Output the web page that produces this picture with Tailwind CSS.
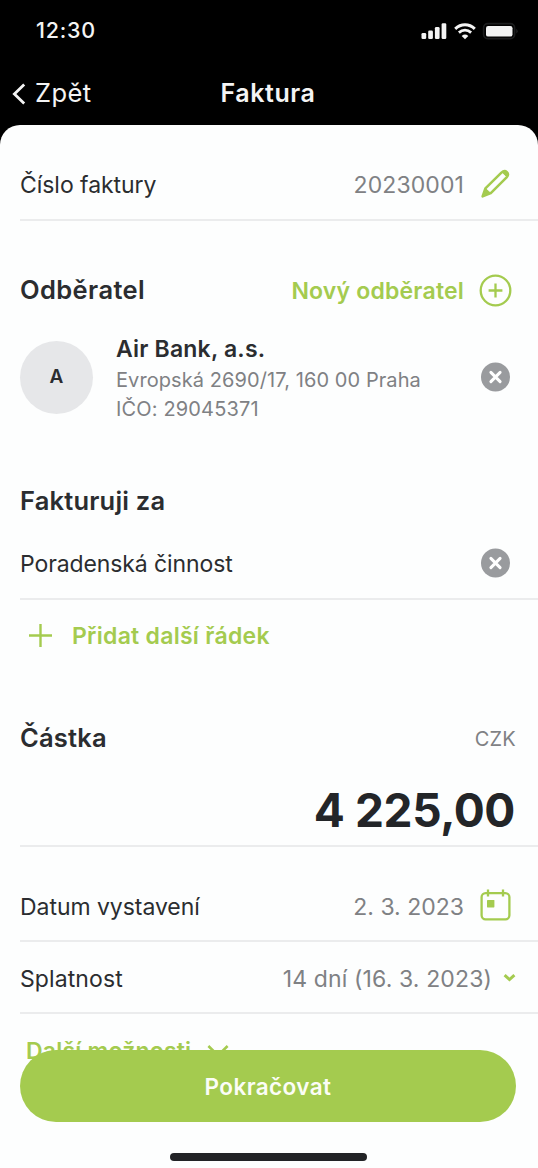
<!DOCTYPE html>
<html lang="cs">
<head>
<meta charset="utf-8">
<title>Faktura</title>
<script src="https://cdn.jsdelivr.net/npm/@tailwindcss/browser@4"></script>
</head>
<body class="bg-black">
<div class="relative flex h-[1168px] w-[538px] flex-col overflow-hidden bg-black font-['Inter','Liberation_Sans',sans-serif] text-[#2b2d30] whitespace-nowrap">
  <header class="h-[125px] shrink-0 text-[#f4f4f4]">
    <div class="flex h-[60px] items-center justify-between pl-9 pr-[18px]">
      <span class="text-[21.5px] font-medium tracking-[0.8px]">12:30</span>
      <div class="flex items-center">
        <svg class="mt-[2px]" width="26" height="18" viewBox="0 0 26 18" fill="#f4f4f4"><rect x="0.5" y="11" width="4.7" height="6" rx="1.3"/><rect x="7.2" y="8.5" width="4.7" height="8.5" rx="1.3"/><rect x="13.9" y="5" width="4.7" height="12" rx="1.3"/><rect x="20.6" y="1.2" width="4.7" height="15.8" rx="1.3"/></svg>
        <svg class="ml-[6px] mt-[1px]" width="24" height="18" viewBox="0 0 24 18" fill="none" stroke="#f4f4f4"><path d="M2.2 6.8C8 1.4 16 1.4 21.8 6.8" stroke-width="3"/><path d="M5.9 10.6C9.5 7.4 14.5 7.4 18.1 10.6" stroke-width="2.8"/><path d="M12 17.2 8.7 13.9Q12 11.2 15.3 13.9Z" fill="#f4f4f4" stroke="none"/></svg>
        <svg class="ml-[5px] mr-[1px] mt-[2px]" width="37" height="18" viewBox="0 0 37 18"><rect x="1.6" y="1.6" width="31" height="15" rx="4.2" fill="none" stroke="#1c1d1e" stroke-width="1.6"/><rect x="4" y="4" width="26.5" height="10.6" rx="2.2" fill="#f4f4f4"/><path d="M34.2 6.8q3.2 2.4 0 4.8Z" fill="#1c1d1e"/></svg>
      </div>
    </div>
    <div class="grid h-[65px] grid-cols-3 items-center pl-[12px] pr-[14px] pt-[2px]">
      <div class="flex items-center gap-[8px]">
        <svg width="15" height="22" viewBox="0 0 15 22" fill="none" stroke="#f4f4f4" stroke-width="2.8"><path d="M12.2 1.6 2.4 11l9.8 9.4"/></svg>
        <span class="text-[25.5px] tracking-[0.4px]">Zpět</span>
      </div>
      <h1 class="text-center text-[25px] font-semibold tracking-[0.55px]">Faktura</h1>
    </div>
  </header>

  <main class="flex-1 rounded-t-[20px] bg-[#fdfefe] pl-5">
    <div class="flex h-[96px] items-center justify-between border-b-2 border-[#ebeced] pr-[28px] pt-[26px]">
      <span class="text-[23px] tracking-[-0.05px]">Číslo faktury</span>
      <div class="flex items-center gap-[16px]">
        <span class="text-[23px] tracking-[0.1px] text-[#7f8184]">20230001</span>
        <svg class="-mt-[2px]" width="30" height="30" viewBox="0 0 30 30" fill="none" stroke="#a4cb4f" stroke-linejoin="round"><path d="M2.6 27.4 5.4 19.4 21.4 3.6Q24.4 1 26.9 3.1 29.2 5.4 26.6 8.4L10.8 24.2Z" stroke-width="2.5"/><path d="M2.6 27.4 5.6 19.6 10.6 24.2Z" fill="#a4cb4f"/><path d="M22.4 3.6 26.6 7.6Q28.8 5 26.6 3.2 24.6 1.6 22.4 3.6Z" fill="#a4cb4f" stroke-width="1"/></svg>
      </div>
    </div>

    <section class="pt-[39px]">
      <div class="flex h-[60px] items-center justify-between pr-[26px]">
        <h2 class="text-[25.5px] font-semibold tracking-[0.4px]">Odběratel</h2>
        <div class="flex items-center gap-[15px] text-[#a4cb4f]">
          <span class="pt-[2px] text-[23px] font-semibold tracking-[0.2px]">Nový odběratel</span>
          <svg width="33" height="33" viewBox="0 0 33 33" fill="none" stroke="currentColor" stroke-width="2.3"><circle cx="16.5" cy="16.5" r="14.8"/><path d="M16.5 9.6v13.8M9.6 16.5h13.8"/></svg>
        </div>
      </div>
      <div class="flex h-[113px] items-center pr-[28px]">
        <div class="mt-px flex size-[73px] shrink-0 items-center justify-center rounded-full bg-[#e6e7e9] pt-px text-[19px] font-semibold">A</div>
        <div class="ml-[23px] flex-1 pt-[5px]">
          <div class="text-[23px] font-semibold leading-[31px] tracking-[0.2px]">Air Bank, a.s.</div>
          <div class="pt-px text-[20px] leading-[29px] tracking-[0.08px] text-[#7f8184]">Evropská 2690/17, 160 00 Praha</div>
          <div class="text-[20px] leading-[29px] tracking-[0.15px] text-[#7f8184]">IČO: 29045371</div>
        </div>
        <svg width="30" height="30" viewBox="0 0 30 30"><circle cx="15.5" cy="15" r="14.5" fill="#999b9e"/><path d="m10.9 10.4 9.2 9.2m0-9.2-9.2 9.2" stroke="#fff" stroke-width="3" stroke-linecap="round"/></svg>
      </div>
    </section>

    <section class="pt-[38px]">
      <h2 class="flex h-[60px] items-center pt-px text-[25.5px] font-semibold tracking-[0.2px]">Fakturuji za</h2>
      <div class="flex h-[69px] items-center justify-between border-b-2 border-[#ebeced] pr-[28px]">
        <span class="text-[23px] tracking-[-0.1px]">Poradenská činnost</span>
        <svg class="-mt-[3px]" width="30" height="30" viewBox="0 0 30 30"><circle cx="15.5" cy="15" r="14.5" fill="#999b9e"/><path d="m10.9 10.4 9.2 9.2m0-9.2-9.2 9.2" stroke="#fff" stroke-width="3" stroke-linecap="round"/></svg>
      </div>
      <div class="flex h-[72px] items-center pl-[8px] text-[#a4cb4f]">
        <svg class="-mt-px" width="25" height="25" viewBox="0 0 25 25" stroke="currentColor" stroke-width="2.4"><path d="M12.5 1v23M1 12.5h23"/></svg>
        <span class="ml-[19px] text-[23px] font-semibold tracking-[0.27px]">Přidat další řádek</span>
      </div>
    </section>

    <section class="border-b-2 border-[#ebeced] pr-[22px] pt-[36px]">
      <div class="flex h-[60px] items-center justify-between pt-px">
        <h2 class="text-[25.5px] font-semibold tracking-[0.2px]">Částka</h2>
        <span class="text-[20px] tracking-[0.2px] text-[#7f8184]">CZK</span>
      </div>
      <div class="flex h-[77px] items-center justify-end pr-px pt-[8px] text-[46px] font-bold tracking-[-0.4px] text-[#232528]">4 225,00</div>
    </section>

    <div class="flex h-[95px] items-center justify-between border-b-2 border-[#ebeced] pr-[27px] pt-[28px]">
      <span class="text-[23px] tracking-[-0.05px]">Datum vystavení</span>
      <div class="flex items-center gap-[16px]">
        <span class="text-[23px] text-[#7f8184]">2. 3. 2023</span>
        <svg class="-mt-[5px]" width="31" height="32" viewBox="0 0 31 32" fill="none" stroke="#a4cb4f" stroke-width="2.3"><rect x="1.6" y="4.1" width="27.8" height="26.2" rx="4"/><path d="M8 .6v6.8M23 .6v6.8"/><rect x="7" y="11" width="7.4" height="7.4" rx=".6" fill="#a4cb4f" stroke="none"/></svg>
      </div>
    </div>
    <div class="flex h-[72px] items-center justify-between border-b-2 border-[#ebeced] pr-[22px] pt-[4px]">
      <span class="text-[23px] tracking-[0.1px]">Splatnost</span>
      <div class="flex items-center gap-[11px]">
        <span class="text-[23px] tracking-[0.13px] text-[#7f8184]">14 dní (16. 3. 2023)</span>
        <svg class="-mt-[3px]" width="13" height="10" viewBox="0 0 13 10" fill="none" stroke="#a4cb4f" stroke-width="3"><path d="m1.6 2.2 4.9 4.4 4.9-4.4"/></svg>
      </div>
    </div>
    <div class="flex h-[74px] items-center pl-[6px] text-[#a4cb4f]">
      <span class="text-[23px] font-semibold tracking-[0.2px]">Další možnosti</span>
      <svg class="ml-[16px]" width="22" height="14" viewBox="0 0 22 14" fill="none" stroke="currentColor" stroke-width="2.6"><path d="m1.4 2 9.6 9.4L20.6 2"/></svg>
    </div>
  </main>

  <div class="absolute bottom-0 left-5 flex h-[118px] w-[496px] flex-col items-center">
    <button class="h-[72px] w-full rounded-full bg-[#a4cb4f] pt-px text-[22.5px] font-semibold tracking-[0.4px] text-[#fbfdf6]">Pokračovat</button>
    <div class="mt-[31px] h-[8px] w-[197px] rounded-full bg-[#222326]"></div>
  </div>
</div>
</body>
</html>
